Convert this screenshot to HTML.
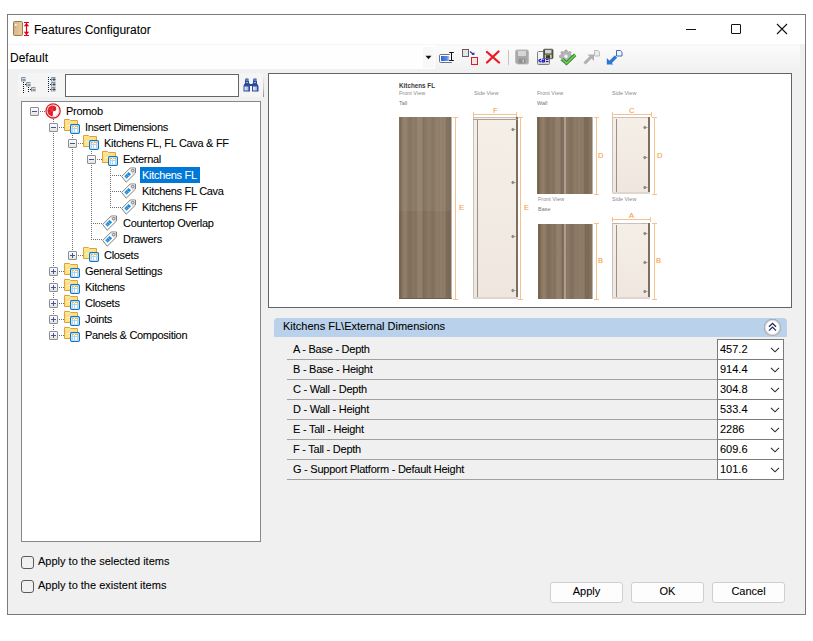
<!DOCTYPE html><html><head><meta charset="utf-8"><style>
*{margin:0;padding:0;box-sizing:border-box}
html,body{width:813px;height:641px;background:#fff;overflow:hidden}
body{position:relative;font-family:"Liberation Sans",sans-serif;font-size:11px;color:#000}
.a{position:absolute}
.t{position:absolute;white-space:nowrap;line-height:13px;-webkit-text-stroke-width:0.08px}
.tr{letter-spacing:-0.3px}
.pg{letter-spacing:-0.25px}
.vd{position:absolute;width:1px;background:repeating-linear-gradient(to bottom,#6f6f6f 0 1px,transparent 1px 2px)}
.hd{position:absolute;height:1px;background:repeating-linear-gradient(to right,#6f6f6f 0 1px,transparent 1px 2px)}
.ex{position:absolute;width:9px;height:9px;border:1px solid #8e8e8e;border-radius:1px;background:linear-gradient(#fdfdfd,#e4e4e4)}
.ex i{position:absolute;left:1px;top:3px;width:5px;height:1px;background:#3c55a5}
.ex b{position:absolute;left:3px;top:1px;width:1px;height:5px;background:#3c55a5}
.vb{position:absolute;left:717px;width:67px;height:21px;background:#fff;border:1px solid #7a7a7a}
.btn{position:absolute;top:582px;width:73px;height:21px;background:#fdfdfd;border:1px solid #cfcfcf;border-radius:3px}
.cb{position:absolute;left:21px;width:13px;height:13px;border:1px solid #5a5a5a;border-radius:3px}
</style></head><body>
<div class="a" style="left:7px;top:14px;width:799px;height:601px;border:1px solid #7a7a7a;background:#f0f0f0"></div>
<div class="a" style="left:8px;top:15px;width:797px;height:29px;background:#fff"></div>
<div class="t" style="left:34px;top:23px;font-size:12px;line-height:14px">Features Configurator</div>
<div class="a" style="left:8px;top:44px;width:792px;height:26px;background:linear-gradient(#f6f6f6 0,#f6f6f6 1px,#fbfbfb 2px,#f2f2f2 24px,#f0f0f0)"></div>
<div class="a" style="left:8px;top:45px;width:427px;height:24px;background:#fefefe"></div>
<div class="t" style="left:10px;top:51px;font-size:12px;line-height:14px">Default</div>
<div class="a" style="left:18px;top:73px;width:246px;height:24px;background:#f5f5f5;border-radius:3px"></div>
<div class="a" style="left:65px;top:74px;width:174px;height:23px;background:#fff;border:1px solid #646464"></div>
<div class="a" style="left:21px;top:101px;width:240px;height:441px;background:#fff;border:1px solid #828790"></div>
<svg class="a" style="left:45px;top:103px" width="16" height="16" viewBox="0 0 16 16">
<circle cx="8.1" cy="7.9" r="7.1" fill="#fff" stroke="#dd1c24" stroke-width="1.3"/>
<circle cx="8.1" cy="7.9" r="5.7" fill="none" stroke="#e9656a" stroke-width="0.6" stroke-dasharray="0.8 0.8"/>
<path d="M7.8 13.3C4.8 13 2.6 10.7 2.6 7.9C2.6 5 4.8 2.6 7.6 2.4C8.6 2.6 9.6 2.9 10.4 3.6C11.2 4.2 11.4 4.9 11 5.6C11.6 6.2 11.4 6.9 10.7 7.4C10 7.9 9 7.7 8.3 8.2C7.9 8.6 7.8 10.5 7.8 13.3Z" fill="#dd1c24"/>
<path d="M7.8 8L3 6M7.8 8L4.5 3.6M7.8 8L3.2 10.2M7.8 8L7.6 2.6" stroke="#f26a70" stroke-width="0.4"/>
</svg>
<div class="t tr" style="left:66px;top:105px">Promob</div>
<div class="hd" style="left:40px;top:111px;width:5px"></div>
<svg class="a" style="left:64px;top:119px" width="16" height="16" viewBox="0 0 16 16">
<defs><linearGradient id="fg64119" x1="0" y1="0" x2="0.3" y2="1"><stop offset="0" stop-color="#fde9a0"/><stop offset="1" stop-color="#f8d372"/></linearGradient></defs>
<path d="M0.5 0.5H5.5L6.5 1.5H13.5V11.5H0.5Z" fill="url(#fg64119)" stroke="#e0a03a" stroke-width="1"/>
<path d="M1 11L2.3 6H13.5L12.5 11Z" fill="#fde58f"/><path d="M2.5 6.5H13" stroke="#fff3c4" stroke-width="1"/>
<rect x="6.6" y="5.6" width="8.8" height="8.8" rx="1.2" fill="#fff" stroke="#0b78c6" stroke-width="1.2"/>
<path d="M8 7.5H10M11 7.5H14" stroke="#f5b22e" stroke-width="1"/>
<path d="M8.5 8V13M10.5 8V13M13.5 8V13M8 9.5H14" stroke="#b3d2f0" stroke-width="1"/>
</svg>
<div class="t tr" style="left:85px;top:121px">Insert Dimensions</div>
<div class="hd" style="left:59px;top:127px;width:5px"></div>
<svg class="a" style="left:83px;top:135px" width="16" height="16" viewBox="0 0 16 16">
<defs><linearGradient id="fg83135" x1="0" y1="0" x2="0.3" y2="1"><stop offset="0" stop-color="#fde9a0"/><stop offset="1" stop-color="#f8d372"/></linearGradient></defs>
<path d="M0.5 0.5H5.5L6.5 1.5H13.5V11.5H0.5Z" fill="url(#fg83135)" stroke="#e0a03a" stroke-width="1"/>
<path d="M1 11L2.3 6H13.5L12.5 11Z" fill="#fde58f"/><path d="M2.5 6.5H13" stroke="#fff3c4" stroke-width="1"/>
<rect x="6.6" y="5.6" width="8.8" height="8.8" rx="1.2" fill="#fff" stroke="#0b78c6" stroke-width="1.2"/>
<path d="M8 7.5H10M11 7.5H14" stroke="#f5b22e" stroke-width="1"/>
<path d="M8.5 8V13M10.5 8V13M13.5 8V13M8 9.5H14" stroke="#b3d2f0" stroke-width="1"/>
</svg>
<div class="t tr" style="left:104px;top:137px">Kitchens FL, FL Cava &amp; FF</div>
<div class="hd" style="left:78px;top:143px;width:5px"></div>
<svg class="a" style="left:102px;top:151px" width="16" height="16" viewBox="0 0 16 16">
<defs><linearGradient id="fg102151" x1="0" y1="0" x2="0.3" y2="1"><stop offset="0" stop-color="#fde9a0"/><stop offset="1" stop-color="#f8d372"/></linearGradient></defs>
<path d="M0.5 0.5H5.5L6.5 1.5H13.5V11.5H0.5Z" fill="url(#fg102151)" stroke="#e0a03a" stroke-width="1"/>
<path d="M1 11L2.3 6H13.5L12.5 11Z" fill="#fde58f"/><path d="M2.5 6.5H13" stroke="#fff3c4" stroke-width="1"/>
<rect x="6.6" y="5.6" width="8.8" height="8.8" rx="1.2" fill="#fff" stroke="#0b78c6" stroke-width="1.2"/>
<path d="M8 7.5H10M11 7.5H14" stroke="#f5b22e" stroke-width="1"/>
<path d="M8.5 8V13M10.5 8V13M13.5 8V13M8 9.5H14" stroke="#b3d2f0" stroke-width="1"/>
</svg>
<div class="t tr" style="left:123px;top:153px">External</div>
<div class="hd" style="left:97px;top:159px;width:5px"></div>
<svg class="a" style="left:121px;top:167px" width="16" height="16" viewBox="0 0 16 16">
<path d="M0.7 9.5L9.2 1H14.5V6L5.2 15.2Z" fill="#fff" stroke="#7d7d7d" stroke-width="1" stroke-linejoin="round"/>
<path d="M10 1.5H14V5.5L12 7.5L8.5 3Z" fill="#e3e3e3"/>
<circle cx="11.7" cy="3.6" r="1.3" fill="none" stroke="#7d7d7d" stroke-width="1"/>
<path d="M3.2 9.3L7.6 5.1L10.1 7.3L5.7 11.8Z" fill="#1f8ad8"/>
<path d="M4.5 8.5L6.5 10.5M6 7L8 9" stroke="#9fd0f3" stroke-width="0.6"/>
</svg>
<div class="a" style="left:140px;top:167px;width:60px;height:16px;background:#0078d7"></div>
<div class="t tr" style="left:142px;top:169px;color:#fff">Kitchens FL</div>
<div class="hd" style="left:112px;top:175px;width:9px"></div>
<svg class="a" style="left:121px;top:183px" width="16" height="16" viewBox="0 0 16 16">
<path d="M0.7 9.5L9.2 1H14.5V6L5.2 15.2Z" fill="#fff" stroke="#7d7d7d" stroke-width="1" stroke-linejoin="round"/>
<path d="M10 1.5H14V5.5L12 7.5L8.5 3Z" fill="#e3e3e3"/>
<circle cx="11.7" cy="3.6" r="1.3" fill="none" stroke="#7d7d7d" stroke-width="1"/>
<path d="M3.2 9.3L7.6 5.1L10.1 7.3L5.7 11.8Z" fill="#1f8ad8"/>
<path d="M4.5 8.5L6.5 10.5M6 7L8 9" stroke="#9fd0f3" stroke-width="0.6"/>
</svg>
<div class="t tr" style="left:142px;top:185px">Kitchens FL Cava</div>
<div class="hd" style="left:112px;top:191px;width:9px"></div>
<svg class="a" style="left:121px;top:199px" width="16" height="16" viewBox="0 0 16 16">
<path d="M0.7 9.5L9.2 1H14.5V6L5.2 15.2Z" fill="#fff" stroke="#7d7d7d" stroke-width="1" stroke-linejoin="round"/>
<path d="M10 1.5H14V5.5L12 7.5L8.5 3Z" fill="#e3e3e3"/>
<circle cx="11.7" cy="3.6" r="1.3" fill="none" stroke="#7d7d7d" stroke-width="1"/>
<path d="M3.2 9.3L7.6 5.1L10.1 7.3L5.7 11.8Z" fill="#1f8ad8"/>
<path d="M4.5 8.5L6.5 10.5M6 7L8 9" stroke="#9fd0f3" stroke-width="0.6"/>
</svg>
<div class="t tr" style="left:142px;top:201px">Kitchens FF</div>
<div class="hd" style="left:112px;top:207px;width:9px"></div>
<svg class="a" style="left:102px;top:215px" width="16" height="16" viewBox="0 0 16 16">
<path d="M0.7 9.5L9.2 1H14.5V6L5.2 15.2Z" fill="#fff" stroke="#7d7d7d" stroke-width="1" stroke-linejoin="round"/>
<path d="M10 1.5H14V5.5L12 7.5L8.5 3Z" fill="#e3e3e3"/>
<circle cx="11.7" cy="3.6" r="1.3" fill="none" stroke="#7d7d7d" stroke-width="1"/>
<path d="M3.2 9.3L7.6 5.1L10.1 7.3L5.7 11.8Z" fill="#1f8ad8"/>
<path d="M4.5 8.5L6.5 10.5M6 7L8 9" stroke="#9fd0f3" stroke-width="0.6"/>
</svg>
<div class="t tr" style="left:123px;top:217px">Countertop Overlap</div>
<div class="hd" style="left:93px;top:223px;width:9px"></div>
<svg class="a" style="left:102px;top:231px" width="16" height="16" viewBox="0 0 16 16">
<path d="M0.7 9.5L9.2 1H14.5V6L5.2 15.2Z" fill="#fff" stroke="#7d7d7d" stroke-width="1" stroke-linejoin="round"/>
<path d="M10 1.5H14V5.5L12 7.5L8.5 3Z" fill="#e3e3e3"/>
<circle cx="11.7" cy="3.6" r="1.3" fill="none" stroke="#7d7d7d" stroke-width="1"/>
<path d="M3.2 9.3L7.6 5.1L10.1 7.3L5.7 11.8Z" fill="#1f8ad8"/>
<path d="M4.5 8.5L6.5 10.5M6 7L8 9" stroke="#9fd0f3" stroke-width="0.6"/>
</svg>
<div class="t tr" style="left:123px;top:233px">Drawers</div>
<div class="hd" style="left:93px;top:239px;width:9px"></div>
<svg class="a" style="left:83px;top:247px" width="16" height="16" viewBox="0 0 16 16">
<defs><linearGradient id="fg83247" x1="0" y1="0" x2="0.3" y2="1"><stop offset="0" stop-color="#fde9a0"/><stop offset="1" stop-color="#f8d372"/></linearGradient></defs>
<path d="M0.5 0.5H5.5L6.5 1.5H13.5V11.5H0.5Z" fill="url(#fg83247)" stroke="#e0a03a" stroke-width="1"/>
<path d="M1 11L2.3 6H13.5L12.5 11Z" fill="#fde58f"/><path d="M2.5 6.5H13" stroke="#fff3c4" stroke-width="1"/>
<rect x="6.6" y="5.6" width="8.8" height="8.8" rx="1.2" fill="#fff" stroke="#0b78c6" stroke-width="1.2"/>
<path d="M8 7.5H10M11 7.5H14" stroke="#f5b22e" stroke-width="1"/>
<path d="M8.5 8V13M10.5 8V13M13.5 8V13M8 9.5H14" stroke="#b3d2f0" stroke-width="1"/>
</svg>
<div class="t tr" style="left:104px;top:249px">Closets</div>
<div class="hd" style="left:78px;top:255px;width:5px"></div>
<svg class="a" style="left:64px;top:263px" width="16" height="16" viewBox="0 0 16 16">
<defs><linearGradient id="fg64263" x1="0" y1="0" x2="0.3" y2="1"><stop offset="0" stop-color="#fde9a0"/><stop offset="1" stop-color="#f8d372"/></linearGradient></defs>
<path d="M0.5 0.5H5.5L6.5 1.5H13.5V11.5H0.5Z" fill="url(#fg64263)" stroke="#e0a03a" stroke-width="1"/>
<path d="M1 11L2.3 6H13.5L12.5 11Z" fill="#fde58f"/><path d="M2.5 6.5H13" stroke="#fff3c4" stroke-width="1"/>
<rect x="6.6" y="5.6" width="8.8" height="8.8" rx="1.2" fill="#fff" stroke="#0b78c6" stroke-width="1.2"/>
<path d="M8 7.5H10M11 7.5H14" stroke="#f5b22e" stroke-width="1"/>
<path d="M8.5 8V13M10.5 8V13M13.5 8V13M8 9.5H14" stroke="#b3d2f0" stroke-width="1"/>
</svg>
<div class="t tr" style="left:85px;top:265px">General Settings</div>
<div class="hd" style="left:59px;top:271px;width:5px"></div>
<svg class="a" style="left:64px;top:279px" width="16" height="16" viewBox="0 0 16 16">
<defs><linearGradient id="fg64279" x1="0" y1="0" x2="0.3" y2="1"><stop offset="0" stop-color="#fde9a0"/><stop offset="1" stop-color="#f8d372"/></linearGradient></defs>
<path d="M0.5 0.5H5.5L6.5 1.5H13.5V11.5H0.5Z" fill="url(#fg64279)" stroke="#e0a03a" stroke-width="1"/>
<path d="M1 11L2.3 6H13.5L12.5 11Z" fill="#fde58f"/><path d="M2.5 6.5H13" stroke="#fff3c4" stroke-width="1"/>
<rect x="6.6" y="5.6" width="8.8" height="8.8" rx="1.2" fill="#fff" stroke="#0b78c6" stroke-width="1.2"/>
<path d="M8 7.5H10M11 7.5H14" stroke="#f5b22e" stroke-width="1"/>
<path d="M8.5 8V13M10.5 8V13M13.5 8V13M8 9.5H14" stroke="#b3d2f0" stroke-width="1"/>
</svg>
<div class="t tr" style="left:85px;top:281px">Kitchens</div>
<div class="hd" style="left:59px;top:287px;width:5px"></div>
<svg class="a" style="left:64px;top:295px" width="16" height="16" viewBox="0 0 16 16">
<defs><linearGradient id="fg64295" x1="0" y1="0" x2="0.3" y2="1"><stop offset="0" stop-color="#fde9a0"/><stop offset="1" stop-color="#f8d372"/></linearGradient></defs>
<path d="M0.5 0.5H5.5L6.5 1.5H13.5V11.5H0.5Z" fill="url(#fg64295)" stroke="#e0a03a" stroke-width="1"/>
<path d="M1 11L2.3 6H13.5L12.5 11Z" fill="#fde58f"/><path d="M2.5 6.5H13" stroke="#fff3c4" stroke-width="1"/>
<rect x="6.6" y="5.6" width="8.8" height="8.8" rx="1.2" fill="#fff" stroke="#0b78c6" stroke-width="1.2"/>
<path d="M8 7.5H10M11 7.5H14" stroke="#f5b22e" stroke-width="1"/>
<path d="M8.5 8V13M10.5 8V13M13.5 8V13M8 9.5H14" stroke="#b3d2f0" stroke-width="1"/>
</svg>
<div class="t tr" style="left:85px;top:297px">Closets</div>
<div class="hd" style="left:59px;top:303px;width:5px"></div>
<svg class="a" style="left:64px;top:311px" width="16" height="16" viewBox="0 0 16 16">
<defs><linearGradient id="fg64311" x1="0" y1="0" x2="0.3" y2="1"><stop offset="0" stop-color="#fde9a0"/><stop offset="1" stop-color="#f8d372"/></linearGradient></defs>
<path d="M0.5 0.5H5.5L6.5 1.5H13.5V11.5H0.5Z" fill="url(#fg64311)" stroke="#e0a03a" stroke-width="1"/>
<path d="M1 11L2.3 6H13.5L12.5 11Z" fill="#fde58f"/><path d="M2.5 6.5H13" stroke="#fff3c4" stroke-width="1"/>
<rect x="6.6" y="5.6" width="8.8" height="8.8" rx="1.2" fill="#fff" stroke="#0b78c6" stroke-width="1.2"/>
<path d="M8 7.5H10M11 7.5H14" stroke="#f5b22e" stroke-width="1"/>
<path d="M8.5 8V13M10.5 8V13M13.5 8V13M8 9.5H14" stroke="#b3d2f0" stroke-width="1"/>
</svg>
<div class="t tr" style="left:85px;top:313px">Joints</div>
<div class="hd" style="left:59px;top:319px;width:5px"></div>
<svg class="a" style="left:64px;top:327px" width="16" height="16" viewBox="0 0 16 16">
<defs><linearGradient id="fg64327" x1="0" y1="0" x2="0.3" y2="1"><stop offset="0" stop-color="#fde9a0"/><stop offset="1" stop-color="#f8d372"/></linearGradient></defs>
<path d="M0.5 0.5H5.5L6.5 1.5H13.5V11.5H0.5Z" fill="url(#fg64327)" stroke="#e0a03a" stroke-width="1"/>
<path d="M1 11L2.3 6H13.5L12.5 11Z" fill="#fde58f"/><path d="M2.5 6.5H13" stroke="#fff3c4" stroke-width="1"/>
<rect x="6.6" y="5.6" width="8.8" height="8.8" rx="1.2" fill="#fff" stroke="#0b78c6" stroke-width="1.2"/>
<path d="M8 7.5H10M11 7.5H14" stroke="#f5b22e" stroke-width="1"/>
<path d="M8.5 8V13M10.5 8V13M13.5 8V13M8 9.5H14" stroke="#b3d2f0" stroke-width="1"/>
</svg>
<div class="t tr" style="left:85px;top:329px">Panels &amp; Composition</div>
<div class="hd" style="left:59px;top:335px;width:5px"></div>
<div class="vd" style="left:53px;top:119px;height:217px"></div>
<div class="vd" style="left:72px;top:135px;height:121px"></div>
<div class="vd" style="left:91px;top:151px;height:89px"></div>
<div class="vd" style="left:110px;top:167px;height:41px"></div>
<div class="ex" style="left:30px;top:107px"><i></i></div>
<div class="ex" style="left:49px;top:123px"><i></i></div>
<div class="ex" style="left:68px;top:139px"><i></i></div>
<div class="ex" style="left:87px;top:155px"><i></i></div>
<div class="ex" style="left:68px;top:251px"><i></i><b></b></div>
<div class="ex" style="left:49px;top:267px"><i></i><b></b></div>
<div class="ex" style="left:49px;top:283px"><i></i><b></b></div>
<div class="ex" style="left:49px;top:299px"><i></i><b></b></div>
<div class="ex" style="left:49px;top:315px"><i></i><b></b></div>
<div class="ex" style="left:49px;top:331px"><i></i><b></b></div>
<svg class="a" style="left:12px;top:20px" width="18" height="17" viewBox="0 0 18 17">
<defs><linearGradient id="dg" x1="0" x2="1"><stop offset="0" stop-color="#d8b684"/><stop offset="1" stop-color="#e9cc9c"/></linearGradient></defs>
<rect x="1.5" y="1.5" width="9" height="14" rx="1" fill="url(#dg)" stroke="#9b7a4e" stroke-width="1"/>
<rect x="3" y="4" width="1.6" height="4" fill="#f4f4f4"/><rect x="3" y="6" width="1.6" height="2" fill="#a9a9a9"/>
<path d="M12 2.5H17M14.5 2.5V15.5M12 15.5H17" stroke="#e0001b" stroke-width="1.2"/>
<path d="M11.8 6.2L14.5 3L17.2 6.2Z" fill="#e0001b"/><path d="M11.8 11.8L14.5 15L17.2 11.8Z" fill="#e0001b"/>
</svg>
<div class="a" style="left:686px;top:29px;width:10px;height:1px;background:#111"></div>
<div class="a" style="left:731px;top:24px;width:10px;height:10px;border:1px solid #111;border-radius:1px"></div>
<svg class="a" style="left:776px;top:23px" width="12" height="12"><path d="M1 1L11 11M11 1L1 11" stroke="#111" stroke-width="1.1"/></svg>
<div class="a" style="left:423px;top:47px;width:11px;height:21px;background:#f8f8f8"></div>
<svg class="a" style="left:425px;top:55px" width="7" height="5"><path d="M0.5 0.8H6.5L3.5 4.2Z" fill="#111"/></svg>
<svg class="a" style="left:438px;top:50px" width="18" height="14" viewBox="0 0 18 14">
<defs><linearGradient id="rg" x1="0" x2="1"><stop offset="0" stop-color="#2a63df"/><stop offset="0.7" stop-color="#5d8de8"/><stop offset="1" stop-color="#c2d6f7"/></linearGradient></defs>
<path d="M11.8 4.5H2.8Q1.5 4.5 1.5 5.8V11.2Q1.5 12.5 2.8 12.5H13.8" fill="#fff" stroke="#6b7180" stroke-width="1"/>
<rect x="3" y="6" width="8.5" height="5" fill="url(#rg)"/>
<path d="M11.2 2.5H15.8M13.5 2.5V10.5M11.2 10.5H15.8" stroke="#111" stroke-width="1"/>
</svg>
<svg class="a" style="left:461px;top:48px" width="18" height="18" viewBox="0 0 18 18">
<rect x="1.5" y="1.5" width="6" height="7" fill="#e4e4e4" stroke="#6a5a62" stroke-width="1"/>
<path d="M9 3.5L12.3 6.3" stroke="#1f3a9a" stroke-width="1.2"/><path d="M10.6 6.9H13.4V4.1Z" fill="#1f3a9a"/>
<rect x="10.5" y="9.5" width="6" height="7" fill="#e8e8e8" stroke="#e21b23" stroke-width="1"/>
</svg>
<svg class="a" style="left:485px;top:50px" width="16" height="14" viewBox="0 0 16 14">
<path d="M2 2L14 12.5M13.5 1.5L2 12.5" stroke="#ea1b22" stroke-width="2.3" stroke-linecap="round"/>
</svg>
<div class="a" style="left:508px;top:50px;width:1px;height:15px;background:#c4c4c4"></div>
<svg class="a" style="left:514px;top:49px" width="16" height="16" viewBox="0 0 16 16">
<path d="M1.5 2.5Q1.5 1 3 1H13Q14.5 1 14.5 2.5V13.5Q14.5 15 13 15H3L1.5 13.5Z" fill="#a9a9a9" stroke="#bdbdbd" stroke-width="1"/>
<rect x="4" y="2" width="8" height="5" fill="#d6d6d6"/><rect x="4.5" y="9.5" width="7" height="5" fill="#8f8f8f"/><rect x="8.5" y="10.5" width="1.5" height="3" fill="#c9c9c9"/>
</svg>
<svg class="a" style="left:536px;top:48px" width="18" height="18" viewBox="0 0 18 18">
<rect x="1.5" y="3.5" width="12" height="13" rx="1" fill="#f2f2f2" stroke="#7d7d7d" stroke-width="1"/>
<rect x="2" y="12" width="11" height="4" fill="#d8d6c8"/>
<path d="M2.5 12.5L5 11M2.5 12.5L5 14" stroke="#1414e6" stroke-width="1.2" fill="none"/>
<path d="M6 11.2Q8.5 10 8.5 12V14.2M8.5 12.8Q6 12 6 13.5Q6.5 14.6 8.5 13.5M10 11.5H12.5M10 13.5H12.5" stroke="#1414e6" stroke-width="1.1" fill="none"/>
<rect x="7.5" y="1.2" width="9.5" height="9.5" rx="1" fill="#4b4a3e" stroke="#5a5848" stroke-width="0.8"/>
<rect x="9" y="2" width="6.5" height="3.5" fill="#d3d3d3"/><rect x="8.8" y="6.6" width="7" height="3.5" fill="#c9c39a"/><rect x="10" y="7.2" width="4" height="2.8" fill="#3a3a30"/>
</svg>
<svg class="a" style="left:558px;top:48px" width="20" height="18" viewBox="0 0 20 18">
<g transform="translate(8,7.2)"><path d="M-1.2 -6.2H1.2L1.6 -4.4L3.3 -3.7L4.8 -4.8L6.4 -3.2L5.3 -1.7L6 0L7.8 0.4V2.6L6 3L5.3 4.7L6.4 6.2L4.8 7.8L3.3 6.7L1.6 7.4L1.2 9.2H-1.2L-1.6 7.4L-3.3 6.7L-4.8 7.8L-6.4 6.2L-5.3 4.7L-6 3L-7.8 2.6V0.4L-6 0L-5.3 -1.7L-6.4 -3.2L-4.8 -4.8L-3.3 -3.7L-1.6 -4.4Z" fill="#b4b4b4" stroke="#8d8d8d" stroke-width="0.7" transform="scale(0.82)"/>
<circle cx="0" cy="1.2" r="1.8" fill="#f0f0f0"/></g>
<path d="M4.3 11.2L8.5 15.2L17.2 6.8" fill="none" stroke="#237a2a" stroke-width="3.4" stroke-linejoin="miter"/>
<path d="M4.3 11.2L8.5 15.2L17.2 6.8" fill="none" stroke="#66d04a" stroke-width="1.8"/>
</svg>
<svg class="a" style="left:582px;top:48px" width="20" height="18" viewBox="0 0 20 18">
<path d="M2.5 15.5L9 9" stroke="#b0b0b0" stroke-width="3"/><path d="M5.5 6.5H12V13Z" fill="#b0b0b0"/>
<path d="M12.5 2.5H16L17.5 4V8H12.5Z" fill="#ececec" stroke="#bdbdbd" stroke-width="1"/>
</svg>
<svg class="a" style="left:604px;top:48px" width="20" height="18" viewBox="0 0 20 18">
<path d="M12 8.5L6 14.5" stroke="#2d77d2" stroke-width="3.2"/><path d="M2.8 16.5V10L9.3 16.5Z" fill="#2d77d2"/>
<path d="M12.5 2.5H16.3L18 4.2V8H12.5Z" fill="#f4f8fd" stroke="#3c68c0" stroke-width="1"/>
</svg>
<svg class="a" style="left:20px;top:76px" width="18" height="18" viewBox="0 0 18 18">
<g fill="#111">
<rect x="3" y="6" width="1" height="1"/><rect x="3" y="8" width="1" height="1"/><rect x="3" y="10" width="1" height="1"/><rect x="3" y="12" width="1" height="1"/><rect x="3" y="14" width="1" height="1"/><rect x="3" y="16" width="1" height="1"/>
<rect x="5" y="8" width="1" height="1"/>
<rect x="8" y="11" width="1" height="1"/><rect x="8" y="13" width="1" height="1"/><rect x="8" y="15" width="1" height="1"/><rect x="10" y="13" width="1" height="1"/>
</g>
<g><path d="M1.5 5.5V1.5H5.5" fill="none" stroke="#6d98c8"/><rect x="2" y="2" width="4" height="4" fill="#d9d9cf"/><rect x="2.5" y="3.5" width="3" height="1" fill="#555"/></g>
<g transform="translate(5,5)"><path d="M1.5 5.5V1.5H5.5" fill="none" stroke="#6d98c8"/><rect x="2" y="2" width="4" height="4" fill="#d9d9cf"/><rect x="2.5" y="3.5" width="3" height="1" fill="#555"/></g>
<g transform="translate(10,10)"><path d="M1.5 5.5V1.5H5.5" fill="none" stroke="#6d98c8"/><rect x="2" y="2" width="4" height="4" fill="#d9d9cf"/><rect x="2.5" y="3.5" width="3" height="1" fill="#555"/></g>
</svg>
<svg class="a" style="left:46px;top:76px" width="12" height="18" viewBox="0 0 12 18">
<g fill="#222"><rect x="2" y="1" width="1" height="1"/><rect x="2" y="3" width="1" height="1"/><rect x="2" y="5" width="1" height="1"/><rect x="2" y="7" width="1" height="1"/><rect x="2" y="9" width="1" height="1"/><rect x="2" y="11" width="1" height="1"/><rect x="2" y="13" width="1" height="1"/><rect x="2" y="15" width="1" height="1"/>
<rect x="4" y="3" width="1" height="1"/><rect x="4" y="8" width="1" height="1"/><rect x="4" y="13" width="1" height="1"/></g>
<g><path d="M5.5 5.5V1.5H9.5" fill="none" stroke="#6d98c8"/><rect x="6" y="2" width="4" height="4" fill="#d9d9cf"/><path d="M6.5 3.5H9.5M8 2V5" stroke="#444" stroke-width="0.9"/></g>
<g transform="translate(0,5)"><path d="M5.5 5.5V1.5H9.5" fill="none" stroke="#6d98c8"/><rect x="6" y="2" width="4" height="4" fill="#d9d9cf"/><path d="M6.5 3.5H9.5M8 2V5" stroke="#444" stroke-width="0.9"/></g>
<g transform="translate(0,10)"><path d="M5.5 5.5V1.5H9.5" fill="none" stroke="#6d98c8"/><rect x="6" y="2" width="4" height="4" fill="#d9d9cf"/><path d="M6.5 3.5H9.5M8 2V5" stroke="#444" stroke-width="0.9"/></g>
</svg>
<svg class="a" style="left:243px;top:78px" width="16" height="14" viewBox="0 0 16 14">
<defs><linearGradient id="bg1" x1="0" x2="1"><stop offset="0" stop-color="#e9eef9"/><stop offset="1" stop-color="#9fb3de"/></linearGradient></defs>
<g fill="#2a4c9c">
<path d="M2.5 0.5H5.5V3H6V5.5H7V13.5H0.5V8L1.5 5.5H2V3Z"/>
<path d="M10.5 0.5H13.5V3H14V5.5L15.5 8V13.5H9V5.5H10V3Z"/>
<rect x="7" y="6" width="2" height="2"/>
</g>
<rect x="1.5" y="8.5" width="4" height="4" fill="url(#bg1)"/><rect x="10" y="8.5" width="4" height="4" fill="url(#bg1)"/>
<rect x="3.5" y="1.5" width="1" height="1.2" fill="#e8edf8"/><rect x="11.5" y="1.5" width="1" height="1.2" fill="#e8edf8"/>
<rect x="3" y="4" width="2" height="1" fill="#9fb3de"/><rect x="11" y="4" width="2" height="1" fill="#9fb3de"/>
</svg>
<div class="a" style="left:263px;top:75px;width:1px;height:22px;background:linear-gradient(#f3f3f3,#c8c8c8 60%,#8e8e8e)"></div>
<div class="a" style="left:268px;top:73px;width:524px;height:235px;background:#fff;border:1px solid #646464"></div>
<div class="t" style="left:399px;top:81.8px;font-size:6.3px;line-height:7.3px;color:#3a3a3a;font-weight:bold;-webkit-text-stroke-width:0">Kitchens FL</div>
<div class="t" style="left:399px;top:89.5px;font-size:5.5px;line-height:6.5px;color:#8a8a8a;font-weight:normal;-webkit-text-stroke-width:0">Front View</div>
<div class="t" style="left:474px;top:89.5px;font-size:5.5px;line-height:6.5px;color:#8a8a8a;font-weight:normal;-webkit-text-stroke-width:0">Side View</div>
<div class="t" style="left:537px;top:89.5px;font-size:5.5px;line-height:6.5px;color:#8a8a8a;font-weight:normal;-webkit-text-stroke-width:0">Front View</div>
<div class="t" style="left:612px;top:89.5px;font-size:5.5px;line-height:6.5px;color:#8a8a8a;font-weight:normal;-webkit-text-stroke-width:0">Side View</div>
<div class="t" style="left:399px;top:100px;font-size:5.5px;line-height:6.5px;color:#777;font-weight:normal;-webkit-text-stroke-width:0">Tall</div>
<div class="t" style="left:537px;top:100px;font-size:5.5px;line-height:6.5px;color:#777;font-weight:normal;-webkit-text-stroke-width:0">Wall</div>
<div class="t" style="left:538px;top:195.5px;font-size:5.5px;line-height:6.5px;color:#8a8a8a;font-weight:normal;-webkit-text-stroke-width:0">Front View</div>
<div class="t" style="left:612px;top:195.5px;font-size:5.5px;line-height:6.5px;color:#8a8a8a;font-weight:normal;-webkit-text-stroke-width:0">Side View</div>
<div class="t" style="left:538px;top:206px;font-size:5.5px;line-height:6.5px;color:#777;font-weight:normal;-webkit-text-stroke-width:0">Base</div>
<div class="a" style="left:399px;top:117px;width:53px;height:182px;background:linear-gradient(90deg,rgba(60,40,20,.12),rgba(0,0,0,0) 6%,rgba(0,0,0,0) 94%,rgba(60,40,20,.12)),repeating-linear-gradient(90deg,rgba(0,0,0,0) 0px,rgba(50,35,20,.13) 1.5px,rgba(0,0,0,0) 3px,rgba(0,0,0,0) 17px,rgba(255,245,230,.10) 19px,rgba(0,0,0,0) 21px,rgba(0,0,0,0) 23px),repeating-linear-gradient(90deg,rgba(0,0,0,0) 0px,rgba(50,35,20,.07) 2px,rgba(0,0,0,0) 4px,rgba(255,245,230,.06) 6px,rgba(0,0,0,0) 8px),repeating-linear-gradient(90deg,#877560 0px,#8b7964 7px,#7f6d5a 13px,#8d7b66 21px,#84725e 29px,#877560 37px)"></div>
<div class="a" style="left:399px;top:117px;width:53px;height:94px;background:rgba(255,250,240,.05)"></div>
<div class="a" style="left:451px;top:117px;width:1px;height:182px;background:#b8b4b0"></div>
<div class="a" style="left:399px;top:298px;width:53px;height:1px;background:#6e6050"></div>
<div class="a" style="left:537px;top:117px;width:56px;height:77px;background:linear-gradient(90deg,rgba(60,40,20,.12),rgba(0,0,0,0) 6%,rgba(0,0,0,0) 94%,rgba(60,40,20,.12)),repeating-linear-gradient(90deg,rgba(0,0,0,0) 0px,rgba(50,35,20,.13) 1.5px,rgba(0,0,0,0) 3px,rgba(0,0,0,0) 17px,rgba(255,245,230,.10) 19px,rgba(0,0,0,0) 21px,rgba(0,0,0,0) 23px),repeating-linear-gradient(90deg,rgba(0,0,0,0) 0px,rgba(50,35,20,.07) 2px,rgba(0,0,0,0) 4px,rgba(255,245,230,.06) 6px,rgba(0,0,0,0) 8px),repeating-linear-gradient(90deg,#877560 0px,#8b7964 7px,#7f6d5a 13px,#8d7b66 21px,#84725e 29px,#877560 37px)"></div>
<div class="a" style="left:564px;top:117px;width:2px;height:77px;background:#aa9f92"></div>
<div class="a" style="left:592px;top:117px;width:1px;height:77px;background:#b8b4b0"></div>
<div class="a" style="left:538px;top:224px;width:55px;height:75px;background:linear-gradient(90deg,rgba(60,40,20,.12),rgba(0,0,0,0) 6%,rgba(0,0,0,0) 94%,rgba(60,40,20,.12)),repeating-linear-gradient(90deg,rgba(0,0,0,0) 0px,rgba(50,35,20,.13) 1.5px,rgba(0,0,0,0) 3px,rgba(0,0,0,0) 17px,rgba(255,245,230,.10) 19px,rgba(0,0,0,0) 21px,rgba(0,0,0,0) 23px),repeating-linear-gradient(90deg,rgba(0,0,0,0) 0px,rgba(50,35,20,.07) 2px,rgba(0,0,0,0) 4px,rgba(255,245,230,.06) 6px,rgba(0,0,0,0) 8px),repeating-linear-gradient(90deg,#877560 0px,#8b7964 7px,#7f6d5a 13px,#8d7b66 21px,#84725e 29px,#877560 37px)"></div>
<div class="a" style="left:564px;top:224px;width:2px;height:75px;background:#aa9f92"></div>
<div class="a" style="left:592px;top:224px;width:1px;height:75px;background:#b8b4b0"></div>
<div class="a" style="left:473px;top:117px;width:45px;height:182px;background:linear-gradient(#f6efe8,#eee6df);border:1px solid #c9c2bb"></div>
<div class="a" style="left:477px;top:119px;width:1px;height:179px;background:#9a928a"></div>
<div class="a" style="left:516px;top:117px;width:2px;height:182px;background:#7d6f60"></div>
<div class="a" style="left:473px;top:297px;width:45px;height:2px;background:#ded6cf"></div>
<svg class="a" style="left:511px;top:127px" width="5" height="5"><path d="M0.5 2.5H4.5" stroke="#999" stroke-width="1"/><ellipse cx="1.8" cy="2.5" rx="1.2" ry="1.7" fill="#8a8a8a"/></svg>
<svg class="a" style="left:511px;top:180px" width="5" height="5"><path d="M0.5 2.5H4.5" stroke="#999" stroke-width="1"/><ellipse cx="1.8" cy="2.5" rx="1.2" ry="1.7" fill="#8a8a8a"/></svg>
<svg class="a" style="left:511px;top:234px" width="5" height="5"><path d="M0.5 2.5H4.5" stroke="#999" stroke-width="1"/><ellipse cx="1.8" cy="2.5" rx="1.2" ry="1.7" fill="#8a8a8a"/></svg>
<svg class="a" style="left:511px;top:288px" width="5" height="5"><path d="M0.5 2.5H4.5" stroke="#999" stroke-width="1"/><ellipse cx="1.8" cy="2.5" rx="1.2" ry="1.7" fill="#8a8a8a"/></svg>
<div class="a" style="left:473px;top:119px;width:45px;height:1px;background:#a7a09a"></div>
<div class="a" style="left:612px;top:117px;width:38px;height:77px;background:linear-gradient(#f6efe8,#eee6df);border:1px solid #c9c2bb"></div>
<div class="a" style="left:616px;top:119px;width:1px;height:74px;background:#9a928a"></div>
<div class="a" style="left:648px;top:117px;width:2px;height:77px;background:#7d6f60"></div>
<div class="a" style="left:612px;top:192px;width:38px;height:2px;background:#ded6cf"></div>
<svg class="a" style="left:643px;top:125px" width="5" height="5"><path d="M0.5 2.5H4.5" stroke="#999" stroke-width="1"/><ellipse cx="1.8" cy="2.5" rx="1.2" ry="1.7" fill="#8a8a8a"/></svg>
<svg class="a" style="left:643px;top:155px" width="5" height="5"><path d="M0.5 2.5H4.5" stroke="#999" stroke-width="1"/><ellipse cx="1.8" cy="2.5" rx="1.2" ry="1.7" fill="#8a8a8a"/></svg>
<svg class="a" style="left:643px;top:185px" width="5" height="5"><path d="M0.5 2.5H4.5" stroke="#999" stroke-width="1"/><ellipse cx="1.8" cy="2.5" rx="1.2" ry="1.7" fill="#8a8a8a"/></svg>
<div class="a" style="left:612px;top:223px;width:38px;height:76px;background:linear-gradient(#f6efe8,#eee6df);border:1px solid #c9c2bb"></div>
<div class="a" style="left:616px;top:225px;width:1px;height:73px;background:#9a928a"></div>
<div class="a" style="left:648px;top:223px;width:2px;height:76px;background:#7d6f60"></div>
<div class="a" style="left:612px;top:297px;width:38px;height:2px;background:#ded6cf"></div>
<svg class="a" style="left:643px;top:231px" width="5" height="5"><path d="M0.5 2.5H4.5" stroke="#999" stroke-width="1"/><ellipse cx="1.8" cy="2.5" rx="1.2" ry="1.7" fill="#8a8a8a"/></svg>
<svg class="a" style="left:643px;top:260px" width="5" height="5"><path d="M0.5 2.5H4.5" stroke="#999" stroke-width="1"/><ellipse cx="1.8" cy="2.5" rx="1.2" ry="1.7" fill="#8a8a8a"/></svg>
<svg class="a" style="left:643px;top:289px" width="5" height="5"><path d="M0.5 2.5H4.5" stroke="#999" stroke-width="1"/><ellipse cx="1.8" cy="2.5" rx="1.2" ry="1.7" fill="#8a8a8a"/></svg>
<div class="a" style="left:612px;top:223px;width:7px;height:1px;background:#bdb5ad"></div>
<div class="a" style="left:641px;top:223px;width:6px;height:1px;background:#bdb5ad"></div>
<div class="a" style="left:473px;top:114px;width:44px;height:1px;background:#f8c08c"></div>
<div class="a" style="left:473px;top:112px;width:1px;height:5px;background:#f8c08c"></div>
<div class="a" style="left:516px;top:112px;width:1px;height:5px;background:#f8c08c"></div>
<div class="t" style="left:493px;top:107px;font-size:7.5px;line-height:8px;color:#f39a45">F</div>
<div class="a" style="left:455px;top:117px;width:1px;height:183px;background:#f8c08c"></div>
<div class="a" style="left:453px;top:117px;width:5px;height:1px;background:#f8c08c"></div>
<div class="a" style="left:453px;top:299px;width:5px;height:1px;background:#f8c08c"></div>
<div class="t" style="left:459px;top:204px;font-size:7.5px;line-height:8px;color:#f39a45">E</div>
<div class="a" style="left:520px;top:117px;width:1px;height:183px;background:#f8c08c"></div>
<div class="a" style="left:518px;top:117px;width:5px;height:1px;background:#f8c08c"></div>
<div class="a" style="left:518px;top:299px;width:5px;height:1px;background:#f8c08c"></div>
<div class="t" style="left:524px;top:204px;font-size:7.5px;line-height:8px;color:#f39a45">E</div>
<div class="a" style="left:596px;top:117px;width:1px;height:78px;background:#f8c08c"></div>
<div class="a" style="left:594px;top:117px;width:5px;height:1px;background:#f8c08c"></div>
<div class="a" style="left:594px;top:194px;width:5px;height:1px;background:#f8c08c"></div>
<div class="t" style="left:598px;top:152px;font-size:7.5px;line-height:8px;color:#f39a45">D</div>
<div class="a" style="left:612px;top:114px;width:40px;height:1px;background:#f8c08c"></div>
<div class="a" style="left:612px;top:112px;width:1px;height:5px;background:#f8c08c"></div>
<div class="a" style="left:651px;top:112px;width:1px;height:5px;background:#f8c08c"></div>
<div class="t" style="left:629px;top:107px;font-size:7.5px;line-height:8px;color:#f39a45">C</div>
<div class="a" style="left:654px;top:117px;width:1px;height:78px;background:#f8c08c"></div>
<div class="a" style="left:652px;top:117px;width:5px;height:1px;background:#f8c08c"></div>
<div class="a" style="left:652px;top:194px;width:5px;height:1px;background:#f8c08c"></div>
<div class="t" style="left:657px;top:152px;font-size:7.5px;line-height:8px;color:#f39a45">D</div>
<div class="a" style="left:596px;top:223px;width:1px;height:77px;background:#f8c08c"></div>
<div class="a" style="left:594px;top:223px;width:5px;height:1px;background:#f8c08c"></div>
<div class="a" style="left:594px;top:299px;width:5px;height:1px;background:#f8c08c"></div>
<div class="t" style="left:598px;top:257px;font-size:7.5px;line-height:8px;color:#f39a45">B</div>
<div class="a" style="left:612px;top:219px;width:39px;height:1px;background:#f8c08c"></div>
<div class="a" style="left:612px;top:217px;width:1px;height:5px;background:#f8c08c"></div>
<div class="a" style="left:650px;top:217px;width:1px;height:5px;background:#f8c08c"></div>
<div class="t" style="left:629px;top:212px;font-size:7.5px;line-height:8px;color:#f39a45">A</div>
<div class="a" style="left:654px;top:223px;width:1px;height:77px;background:#f8c08c"></div>
<div class="a" style="left:652px;top:223px;width:5px;height:1px;background:#f8c08c"></div>
<div class="a" style="left:652px;top:299px;width:5px;height:1px;background:#f8c08c"></div>
<div class="t" style="left:656px;top:257px;font-size:7.5px;line-height:8px;color:#f39a45">B</div>
<div class="a" style="left:274px;top:318px;width:513px;height:19px;background:#b9d1ea;border-radius:4px 4px 1px 1px"></div>
<div class="t" style="left:283px;top:320px">Kitchens FL\External Dimensions</div>
<div class="a" style="left:764px;top:319px;width:17px;height:17px;border-radius:50%;background:radial-gradient(closest-side,#fff 0,#fff 70%,#d6d6d6 86%,#8f8f8f 100%)"></div>
<svg class="a" style="left:767px;top:322px" width="11" height="11"><path d="M2 4.8L5.5 1.3L9 4.8M2 8.6L5.5 5.1L9 8.6" fill="none" stroke="#1b2a5c" stroke-width="1.25"/></svg>
<div class="t pg" style="left:293px;top:343px">A - Base - Depth</div>
<div class="a" style="left:287px;top:359px;width:430px;height:1px;background:#a0a0a0"></div>
<div class="vb" style="top:339px"></div>
<div class="t" style="left:720px;top:343px">457.2</div>
<svg class="a" style="left:770px;top:347px" width="10" height="6"><path d="M1 0.8L5 4.8L9 0.8" fill="none" stroke="#2a2a2a" stroke-width="1.05"/></svg>
<div class="t pg" style="left:293px;top:363px">B - Base - Height</div>
<div class="a" style="left:287px;top:379px;width:430px;height:1px;background:#a0a0a0"></div>
<div class="vb" style="top:359px"></div>
<div class="t" style="left:720px;top:363px">914.4</div>
<svg class="a" style="left:770px;top:367px" width="10" height="6"><path d="M1 0.8L5 4.8L9 0.8" fill="none" stroke="#2a2a2a" stroke-width="1.05"/></svg>
<div class="t pg" style="left:293px;top:383px">C - Wall - Depth</div>
<div class="a" style="left:287px;top:399px;width:430px;height:1px;background:#a0a0a0"></div>
<div class="vb" style="top:379px"></div>
<div class="t" style="left:720px;top:383px">304.8</div>
<svg class="a" style="left:770px;top:387px" width="10" height="6"><path d="M1 0.8L5 4.8L9 0.8" fill="none" stroke="#2a2a2a" stroke-width="1.05"/></svg>
<div class="t pg" style="left:293px;top:403px">D - Wall - Height</div>
<div class="a" style="left:287px;top:419px;width:430px;height:1px;background:#a0a0a0"></div>
<div class="vb" style="top:399px"></div>
<div class="t" style="left:720px;top:403px">533.4</div>
<svg class="a" style="left:770px;top:407px" width="10" height="6"><path d="M1 0.8L5 4.8L9 0.8" fill="none" stroke="#2a2a2a" stroke-width="1.05"/></svg>
<div class="t pg" style="left:293px;top:423px">E - Tall - Height</div>
<div class="a" style="left:287px;top:439px;width:430px;height:1px;background:#a0a0a0"></div>
<div class="vb" style="top:419px"></div>
<div class="t" style="left:720px;top:423px">2286</div>
<svg class="a" style="left:770px;top:427px" width="10" height="6"><path d="M1 0.8L5 4.8L9 0.8" fill="none" stroke="#2a2a2a" stroke-width="1.05"/></svg>
<div class="t pg" style="left:293px;top:443px">F - Tall - Depth</div>
<div class="a" style="left:287px;top:459px;width:430px;height:1px;background:#a0a0a0"></div>
<div class="vb" style="top:439px"></div>
<div class="t" style="left:720px;top:443px">609.6</div>
<svg class="a" style="left:770px;top:447px" width="10" height="6"><path d="M1 0.8L5 4.8L9 0.8" fill="none" stroke="#2a2a2a" stroke-width="1.05"/></svg>
<div class="t pg" style="left:293px;top:463px">G - Support Platform - Default Height</div>
<div class="a" style="left:287px;top:479px;width:430px;height:1px;background:#a0a0a0"></div>
<div class="vb" style="top:459px"></div>
<div class="t" style="left:720px;top:463px">101.6</div>
<svg class="a" style="left:770px;top:467px" width="10" height="6"><path d="M1 0.8L5 4.8L9 0.8" fill="none" stroke="#2a2a2a" stroke-width="1.05"/></svg>
<div class="cb" style="top:556px"></div><div class="t" style="left:38px;top:555px">Apply to the selected items</div>
<div class="cb" style="top:580px"></div><div class="t" style="left:38px;top:579px">Apply to the existent items</div>
<div class="btn" style="left:550px"></div>
<div class="t" style="left:550px;width:73px;text-align:center;top:585px">Apply</div>
<div class="btn" style="left:631px"></div>
<div class="t" style="left:631px;width:73px;text-align:center;top:585px">OK</div>
<div class="btn" style="left:712px"></div>
<div class="t" style="left:712px;width:73px;text-align:center;top:585px">Cancel</div>
</body></html>
